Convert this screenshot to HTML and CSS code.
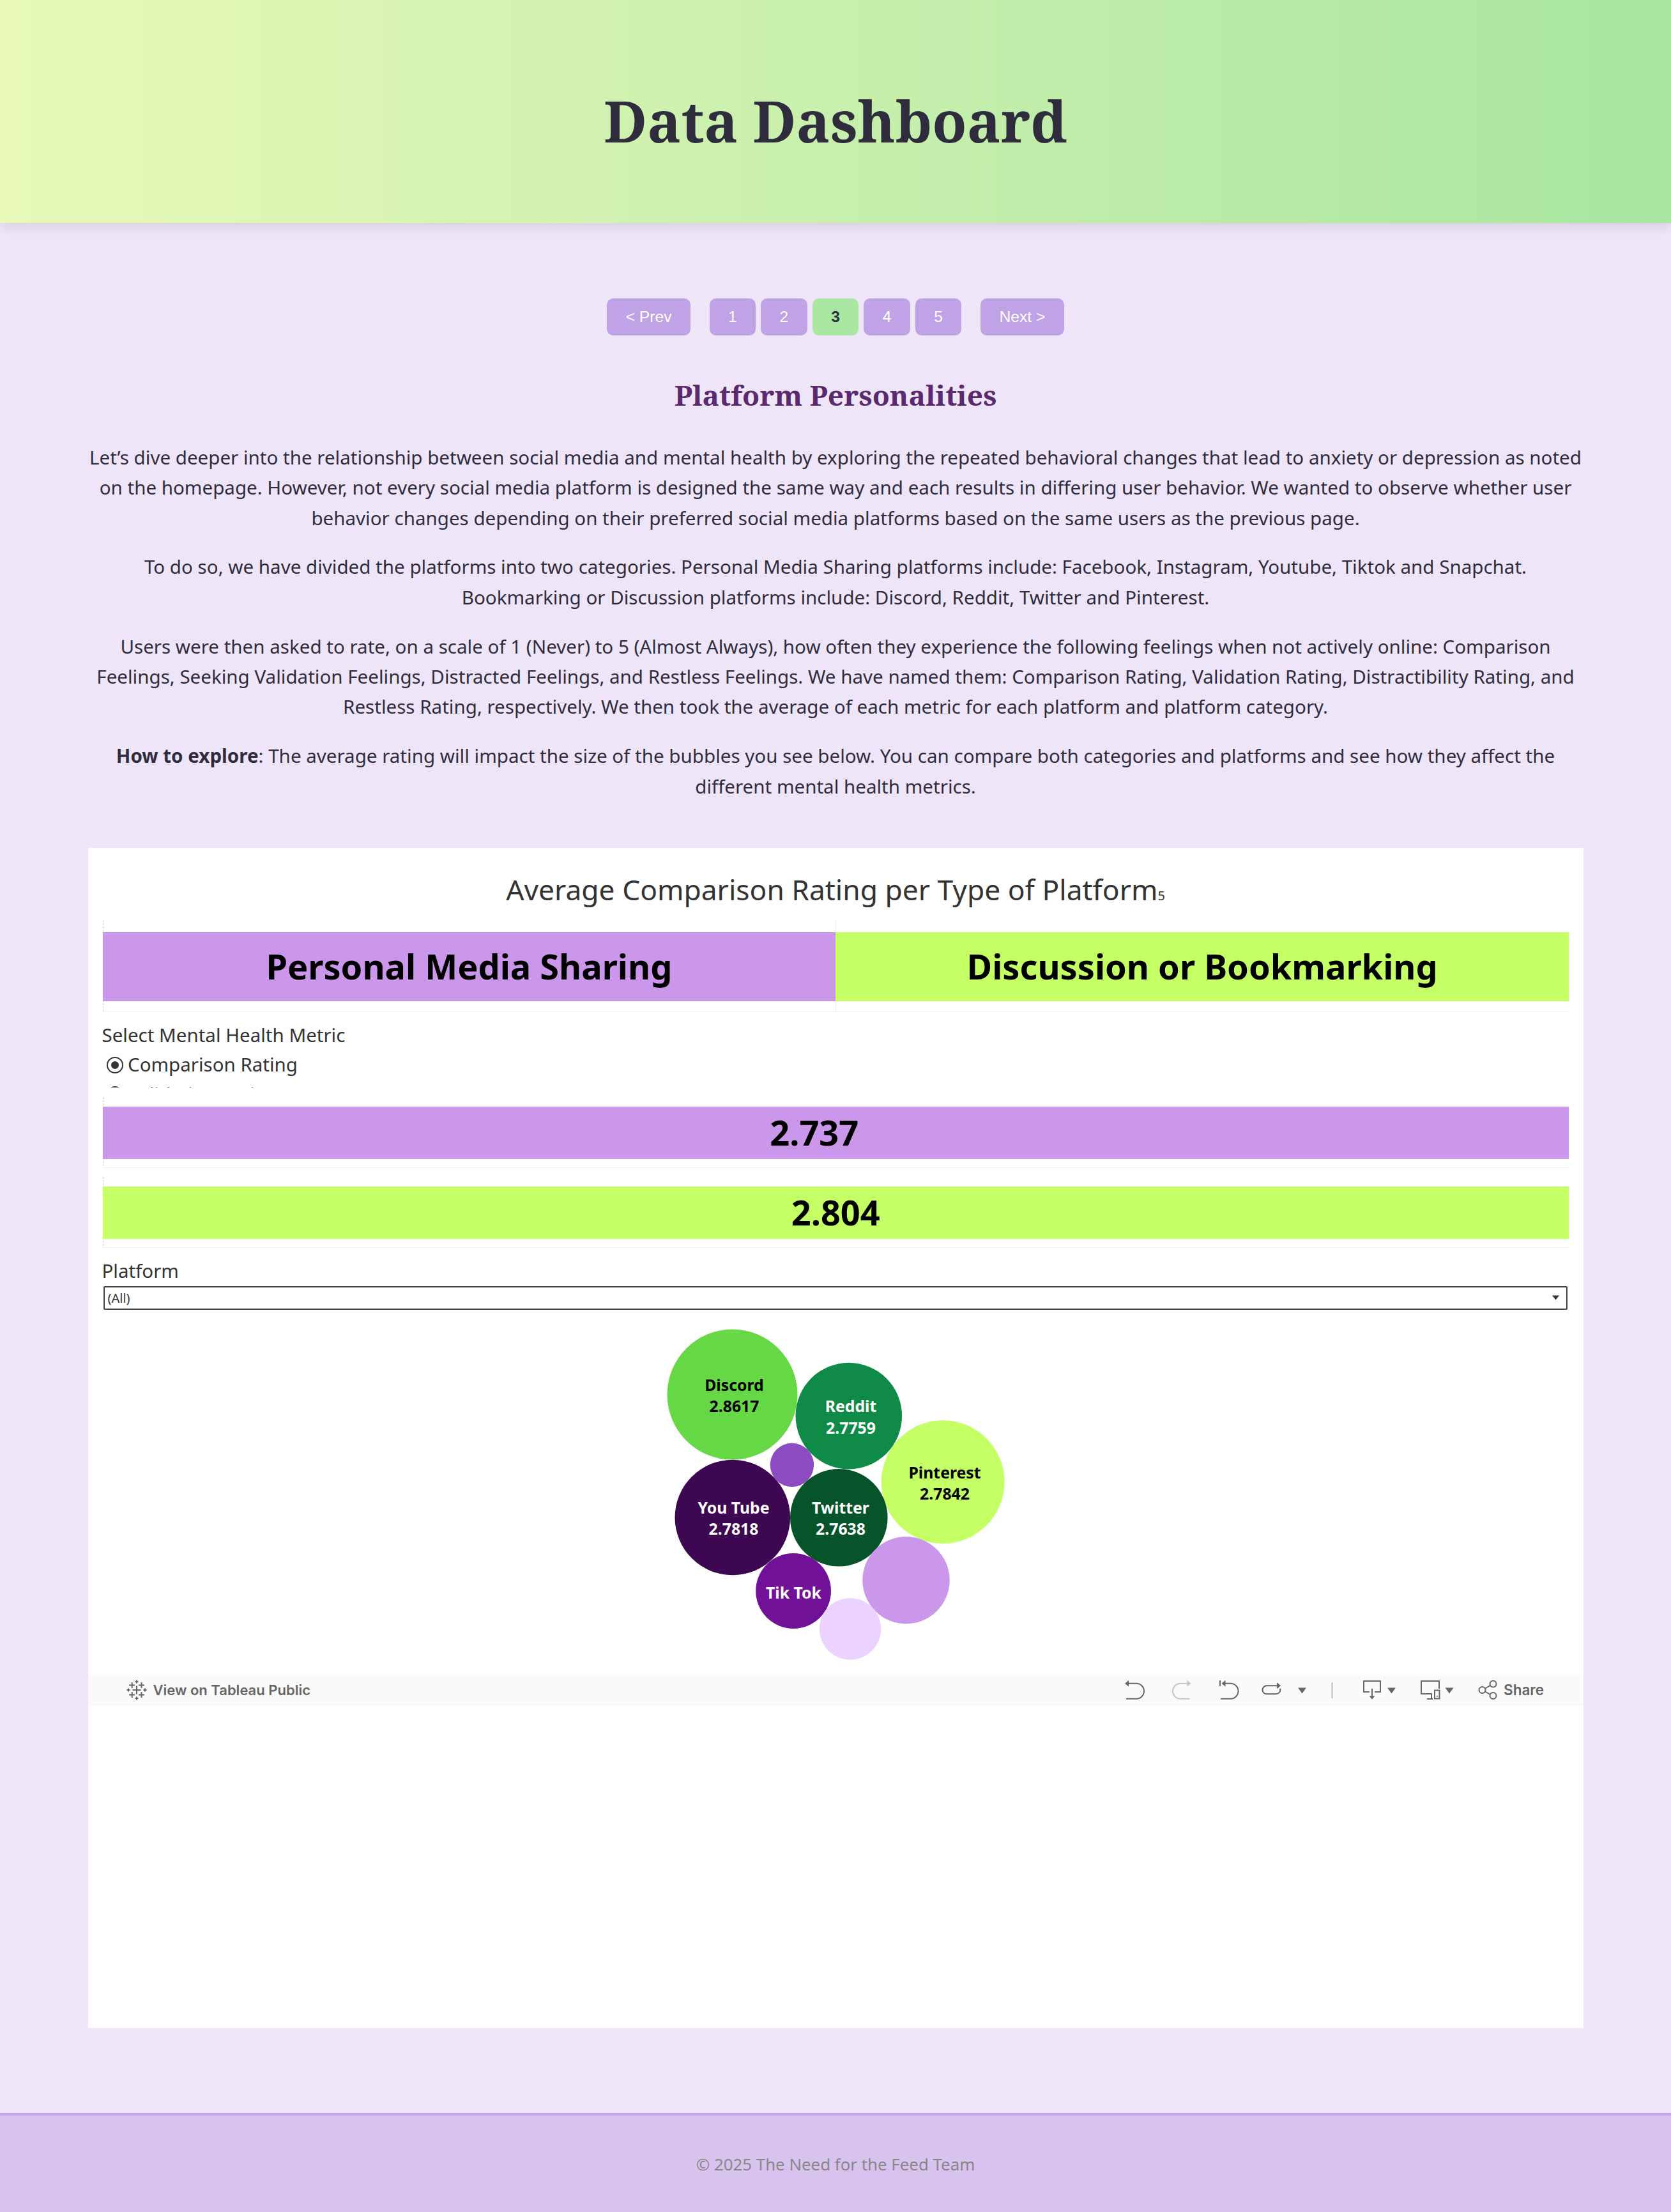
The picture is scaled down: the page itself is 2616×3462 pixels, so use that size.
FILE: index.html
```html
<!DOCTYPE html>
<html lang="en">
<head>
<meta charset="utf-8">
<title>Data Dashboard</title>
<link rel="stylesheet" href="styles.css">
</head>
<body>
<header class="site-header"><h1>Data Dashboard</h1></header>
<main class="content">
  <nav class="pager">
    <button class="page-btn step">&lt; Prev</button>
    <div class="pages">
      <button class="page-btn">1</button>
      <button class="page-btn">2</button>
      <button class="page-btn active">3</button>
      <button class="page-btn">4</button>
      <button class="page-btn">5</button>
    </div>
    <button class="page-btn step">Next &gt;</button>
  </nav>
  <section class="intro">
    <h2>Platform Personalities</h2>
    <p>Let’s dive deeper into the relationship between social media and mental health by exploring the repeated behavioral changes that lead to anxiety or depression as noted<br>on the homepage. However, not every social media platform is designed the same way and each results in differing user behavior. We wanted to observe whether user<br>behavior changes depending on their preferred social media platforms based on the same users as the previous page.</p>
    <p>To do so, we have divided the platforms into two categories. Personal Media Sharing platforms include: Facebook, Instagram, Youtube, Tiktok and Snapchat.<br>Bookmarking or Discussion platforms include: Discord, Reddit, Twitter and Pinterest.</p>
    <p>Users were then asked to rate, on a scale of 1 (Never) to 5 (Almost Always), how often they experience the following feelings when not actively online: Comparison<br>Feelings, Seeking Validation Feelings, Distracted Feelings, and Restless Feelings. We have named them: Comparison Rating, Validation Rating, Distractibility Rating, and<br>Restless Rating, respectively. We then took the average of each metric for each platform and platform category.</p>
    <p><strong>How to explore</strong>: The average rating will impact the size of the bubbles you see below. You can compare both categories and platforms and see how they affect the<br>different mental health metrics.</p>
  </section>
  <section class="viz">
    <h3 class="viz-title">Average Comparison Rating per Type of Platform<small>5</small></h3>
    <div class="legend chart-row">
      <div class="bar purple">Personal Media Sharing</div>
      <div class="bar lime">Discussion or Bookmarking</div>
    </div>
    <div class="metric">
      <div class="field-label">Select Mental Health Metric</div>
      <div class="option"><span class="radio checked"></span>Comparison Rating</div>
      <div class="option"><span class="radio"></span>Validation Rating</div>
    </div>
    <div class="total chart-row"><div class="bar purple personal-total">2.737</div></div>
    <div class="total second chart-row"><div class="bar lime">2.804</div></div>
    <div class="field-label platform-label">Platform</div>
    <div class="dropdown"><span>(All)</span><svg width="11" height="8" viewBox="0 0 11 8"><path d="M0 .5h11l-5.500 7z" fill="#333"/></svg></div>
    <svg class="bubbles" width="2341" height="570" viewBox="137.5 2050 2341 570">
      <circle cx="1146" cy="2182.6" r="102" fill="#66d846"/>
      <circle cx="1328.3" cy="2216.1" r="83.3" fill="#0f8b47"/>
      <circle cx="1475.7" cy="2319.4" r="96.4" fill="#c4ff66"/>
      <circle cx="1146.3" cy="2375" r="90.3" fill="#3e0751"/>
      <circle cx="1239.4" cy="2292.8" r="34.2" fill="#8c4bc1"/>
      <circle cx="1312.8" cy="2375.3" r="76.3" fill="#08542a"/>
      <circle cx="1241.6" cy="2490" r="58.9" fill="#701197"/>
      <circle cx="1418" cy="2473.2" r="68.2" fill="#ca97ea"/>
      <circle cx="1330.5" cy="2549.4" r="48.2" fill="#ebd2ff"/>
      <text class="dark" x="1149" y="2177">Discord</text><text class="dark" x="1149" y="2210">2.8617</text>
      <text x="1331.5" y="2210">Reddit</text><text x="1331.5" y="2243.5">2.7759</text>
      <text class="dark" x="1478.5" y="2313.5">Pinterest</text><text class="dark" x="1478.5" y="2346.8">2.7842</text>
      <text x="1148" y="2368.6">You Tube</text><text x="1148" y="2402">2.7818</text>
      <text x="1315.5" y="2368.6">Twitter</text><text x="1315.5" y="2402">2.7638</text>
      <text x="1242" y="2502">Tik Tok</text>
    </svg>
    <div class="toolbar">
      <svg class="logo" width="32" height="32" viewBox="0 0 32 32" fill="none" stroke="#666" stroke-width="2">
        <path d="M16 9.500v13M9.500 16h13M8.700 4v9M4 8.500h9M23.500 4v9M19 8.500h9M8.700 19v9M4 23.500h9M23.500 19v9M19 23.500h9M16 0.500v5M13.500 3h5M16 26.500v5M13.500 29h5M3 13.500v5M.5 16h5M29 13.500v5M26.500 16h5"/>
      </svg>
      <span class="tb-text">View on Tableau Public</span>
      <svg class="tools" width="690" height="50" viewBox="1750 2620 690 50" fill="none" stroke="#666" stroke-width="2">
        <path d="M1765 2634.700H1779a12 12 0 0 1 0 24H1763"/><path d="M1761 2634.700l6-5v10z" fill="#666" stroke="none"/>
        <g stroke="#c4c4c4"><path d="M1860 2634.700H1848a12 12 0 0 0 0 24H1862.500"/><path d="M1864.500 2634.700l-6-5v10z" fill="#c4c4c4" stroke="none"/></g>
        <path d="M1917 2634.700H1926.500a12 12 0 0 1 0 24H1911M1910 2630v9"/><path d="M1912.500 2634.700l6-5v10z" fill="#666" stroke="none"/>
        <path d="M2000 2638.300H1983a6.500 6.500 0 0 0 0 13H1997.500a6.500 6.500 0 0 0 6.500-8.500"/><path d="M2005 2638.300l-6-5v10z" fill="#666" stroke="none"/>
        <path d="M2032 2641.500h13l-6.500 9z" fill="#666" stroke="none"/>
        <path d="M2085.500 2633v25" stroke="#bbb"/>
        <path d="M2144 2648h-9v-17h26v17h-9M2148 2643v14"/><path d="M2143.500 2654.500h9l-4.500 5z" fill="#666" stroke="none"/>
        <path d="M2172 2641.500h13l-6.500 9z" fill="#666" stroke="none"/>
        <path d="M2253 2643v-12h-28v20h16v8M2234 2659h9M2246 2645.500h7.500v13h-7.500z"/><path d="M2249 2655h1.500"/>
        <path d="M2262.500 2641.500h13l-6.500 9z" fill="#666" stroke="none"/>
        <circle cx="2320.500" cy="2645" r="5"/><circle cx="2337.500" cy="2635.500" r="5"/><circle cx="2337.500" cy="2654" r="5"/><path d="M2325 2642.500l8-4.500M2325 2647.500l8 4.500"/>
        <text class="share" x="2354" y="2653" stroke="none" fill="#666">Share</text>
      </svg>
    </div>
  </section>
</main>
<footer class="site-footer">© 2025 The Need for the Feed Team</footer>
</body>
</html>
```
FILE: styles.css
```css
* { box-sizing: border-box; }
body { margin: 0; background: #eee5f8; color: #2f2d3d; font-family: "Noto Sans", sans-serif; }
.site-header { height: 349px; padding-top: 128px; text-align: center; background: linear-gradient(90deg, #e8f9b8, #a8e6a1); box-shadow: 0 4px 20px rgba(0,0,0,.12); }
h1 { margin: 0; font: bold 88.7px/122px "Noto Serif", "DejaVu Serif", serif; }
.content { padding: 118px 137.5px 0; }
.pager { display: flex; justify-content: center; gap: 29.5px; }
.pages { display: flex; gap: 8px; }
.page-btn { width: 72.6px; height: 58px; padding: 0; border: 0; border-radius: 10px; background: #c0a3e6; color: #fff; font: 24.7px "Liberation Sans", Arial, sans-serif; }
.step { width: 131px; }
.active { background: #a8e6a1; color: #2f2d3d; font-weight: bold; }
.intro { height: 802.3px; text-align: center; padding-top: 63px; }
h2 { margin: 0 0 42.8px; color: #5b2a6e; font: bold 44.3px/61px "Noto Serif", "DejaVu Serif", serif; }
.intro p { margin: 0 0 29.4px; font-size: 29.56px; line-height: 47.4px; white-space: nowrap; }
.viz { height: 1846.5px; background: #fff; color: #333; }
.viz-title { margin: 0; padding-top: 34.5px; height: 113px; text-align: center; font-weight: 400; font-size: 44.35px; line-height: 61px; }
.viz-title small { font-size: 20px; }
.chart-row { margin: 0 22.5px 0 23px; display: flex; border-bottom: 1px solid #f0f0f0; background: repeating-linear-gradient(#ddd 0 3px, #fff 3px 5px) 0 0 / 1.5px 100% no-repeat; }
.bar { flex: 1; display: flex; align-items: center; justify-content: center; padding-bottom: 3px; color: #000; font-weight: bold; font-size: 54.1px; line-height: 1; }
.purple { background: #ca97ea; }
.lime { background: #c4ff66; }
.legend { height: 144px; padding: 19px 0 16px; background: repeating-linear-gradient(#ddd 0 3px, #fff 3px 5px) 0 0 / 1.5px 100% no-repeat, linear-gradient(#eee, #eee) 50% 0 / 1px 100% no-repeat; }
.metric { height: 105.500px; margin: 12.7px 22px 14.2px; overflow: hidden; font-size: 29.5px; }
.field-label { font-size: 29.5px; line-height: 46px; height: 46px; }
.option { display: flex; align-items: center; height: 46px; padding-left: 7.5px; gap: 7px; }
.radio { position: relative; top: 1px; width: 26px; height: 26px; border: 2px solid #333; border-radius: 50%; display: grid; place-items: center; }
.checked::after { content: ""; width: 12px; height: 12px; border-radius: 50%; background: #333; }
.total { height: 111px; padding: 15.500px 0 12.5px; }
.personal-total { padding-right: 67px; }
.second { margin-top: 14px; }
.platform-label { height: 46.7px; margin: 13.3px 22px 0; }
.dropdown { display: flex; justify-content: space-between; align-items: center; height: 37px; margin: 0 24.5px 0 24px; padding: 0 11px 0 5px; border: 2px solid #444; border-radius: 2px; font-size: 20px; }
.bubbles { display: block; }
.bubbles text { font: bold 24.8px "Noto Sans", sans-serif; text-anchor: middle; fill: #fff; }
.bubbles .dark { fill: #000; }
.toolbar { height: 50px; background: #fafafa; display: flex; align-items: center; padding: 0 38.5px 0 60.500px; }
.tb-text { font: 600 22px Inter, sans-serif; color: #666; }
.share { font: 600 22.5px Inter, sans-serif; }
.logo { margin-right: 9.5px; }
.tools { margin-left: auto; }
.site-footer { margin-top: 133px; height: 155.2px; border-top: 4px solid #c0a3e6; background: #d8c3ef; color: #888; text-align: center; font-size: 25.85px; line-height: 152px; }
```
